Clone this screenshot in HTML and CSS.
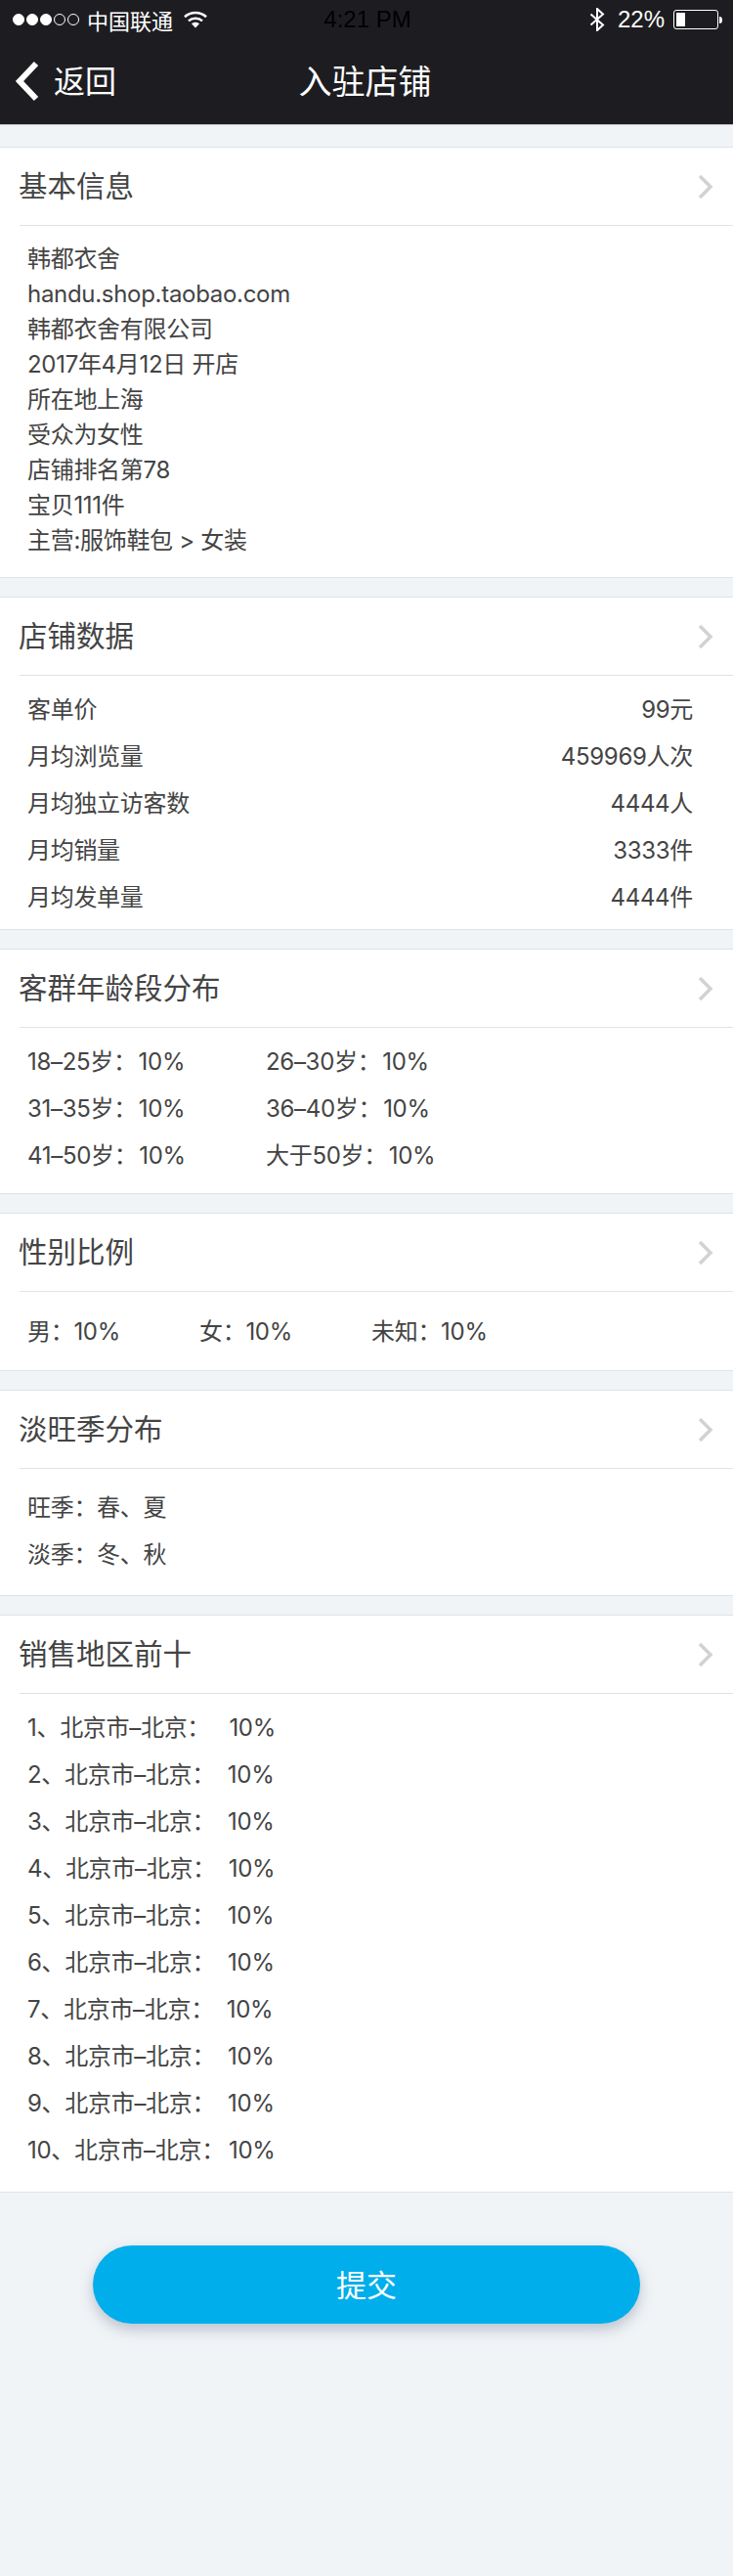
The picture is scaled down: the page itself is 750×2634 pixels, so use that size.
FILE: index.html
```html
<!DOCTYPE html>
<html lang="zh-CN">
<head>
    <meta charset="utf-8" />
    <meta name="viewport" content="width=device-width, initial-scale=1.0">
    <title>入驻店铺</title>
    <link rel="stylesheet" href="styles.css">
</head>
<body>
    <header class="topbar">
        <div class="status">
            <div class="status-left">
                <span class="signal">
                    <i class="dot on"></i><i class="dot on"></i><i class="dot on"></i><i class="dot"></i><i class="dot"></i>
                </span>
                <span class="carrier">中国联通</span>
                <svg class="wifi" width="24" height="18" viewBox="0 0 24 18">
                    <path d="M1 6.2C7 .6 17 .6 23 6.2" fill="none" stroke="#fff" stroke-width="2.6" />
                    <path d="M5 10.4C9 6.8 15 6.8 19 10.4" fill="none" stroke="#fff" stroke-width="2.6" />
                    <path d="M8 13.2C10.4 11.2 13.6 11.2 16 13.2L12 17.6Z" fill="#fff" />
                </svg>
            </div>
            <div class="time">4:21 PM</div>
            <div class="status-right">
                <svg class="bluetooth" width="16" height="24" viewBox="0 0 16 24">
                    <path d="M1.5 6.5L14 17.5L8 23V1L14 6.5L1.5 17.5" fill="none" stroke="#fff" stroke-width="2" />
                </svg>
                <span class="battery-text">22%</span>
                <span class="battery"><i class="battery-fill"></i></span>
                <i class="battery-nub"></i>
            </div>
        </div>
        <nav class="navbar">
            <a class="back">
                <svg class="back-icon" width="26" height="42" viewBox="0 0 26 42">
                    <path d="M22 3L5 21L22 39" fill="none" stroke="#fff" stroke-width="6" />
                </svg>
                <span>返回</span>
            </a>
            <h1>入驻店铺</h1>
        </nav>
    </header>

    <main>
        <section class="card">
            <div class="card-head">
                <h2>基本信息</h2>
                <svg class="arrow" width="16" height="26" viewBox="0 0 16 26"><path d="M2 2L13 13L2 24" /></svg>
            </div>
            <div class="info">
                <p>韩都衣舍</p>
                <p>handu.shop.taobao.com</p>
                <p>韩都衣舍有限公司</p>
                <p>2017年4月12日 开店</p>
                <p>所在地上海</p>
                <p>受众为女性</p>
                <p>店铺排名第78</p>
                <p>宝贝111件</p>
                <p>主营:服饰鞋包 &gt; 女装</p>
            </div>
        </section>

        <section class="card">
            <div class="card-head">
                <h2>店铺数据</h2>
                <svg class="arrow" width="16" height="26" viewBox="0 0 16 26"><path d="M2 2L13 13L2 24" /></svg>
            </div>
            <div class="rows rows-data">
                <div class="row between"><span>客单价</span><span>99元</span></div>
                <div class="row between"><span>月均浏览量</span><span>459969人次</span></div>
                <div class="row between"><span>月均独立访客数</span><span>4444人</span></div>
                <div class="row between"><span>月均销量</span><span>3333件</span></div>
                <div class="row between"><span>月均发单量</span><span>4444件</span></div>
            </div>
        </section>

        <section class="card">
            <div class="card-head">
                <h2>客群年龄段分布</h2>
                <svg class="arrow" width="16" height="26" viewBox="0 0 16 26"><path d="M2 2L13 13L2 24" /></svg>
            </div>
            <div class="rows rows-age">
                <div class="row"><span class="age">18–25岁：&#8202;10%</span><span>26–30岁：&#8202;10%</span></div>
                <div class="row"><span class="age">31–35岁：&#8202;10%</span><span>36–40岁：&#8202;10%</span></div>
                <div class="row"><span class="age">41–50岁：&#8202;10%</span><span>大于50岁：&#8202;10%</span></div>
            </div>
        </section>

        <section class="card">
            <div class="card-head">
                <h2>性别比例</h2>
                <svg class="arrow" width="16" height="26" viewBox="0 0 16 26"><path d="M2 2L13 13L2 24" /></svg>
            </div>
            <div class="rows rows-gender">
                <div class="row"><span class="gender">男：10%</span><span class="gender">女：10%</span><span>未知：10%</span></div>
            </div>
        </section>

        <section class="card">
            <div class="card-head">
                <h2>淡旺季分布</h2>
                <svg class="arrow" width="16" height="26" viewBox="0 0 16 26"><path d="M2 2L13 13L2 24" /></svg>
            </div>
            <div class="rows rows-season">
                <div class="row">旺季：春、夏</div>
                <div class="row">淡季：冬、秋</div>
            </div>
        </section>

        <section class="card">
            <div class="card-head">
                <h2>销售地区前十</h2>
                <svg class="arrow" width="16" height="26" viewBox="0 0 16 26"><path d="M2 2L13 13L2 24" /></svg>
            </div>
            <div class="rows rows-area">
                <div class="row">1、北京市–北京：&nbsp;&nbsp;&nbsp;10%</div>
                <div class="row">2、北京市–北京：&nbsp;&nbsp;10%</div>
                <div class="row">3、北京市–北京：&nbsp;&nbsp;10%</div>
                <div class="row">4、北京市–北京：&nbsp;&nbsp;10%</div>
                <div class="row">5、北京市–北京：&nbsp;&nbsp;10%</div>
                <div class="row">6、北京市–北京：&nbsp;&nbsp;10%</div>
                <div class="row">7、北京市–北京：&nbsp;&nbsp;10%</div>
                <div class="row">8、北京市–北京：&nbsp;&nbsp;10%</div>
                <div class="row">9、北京市–北京：&nbsp;&nbsp;10%</div>
                <div class="row">10、北京市–北京：&#8201;10%</div>
            </div>
        </section>

        <div class="actions">
            <button type="button" class="submit">提交</button>
        </div>
    </main>
</body>
</html>
```

FILE: styles.css
```css
* {
    box-sizing: border-box;
}
html,
body {
    margin: 0;
    padding: 0;
}
body {
    min-height: 2634px;
    background: #f0f4f7;
    color: #444;
    font-family: Inter, "Noto Sans CJK SC", sans-serif;
    font-size: 24px;
    letter-spacing: -0.3px;
}
.topbar {
    height: 128px;
    background: #1d1d21;
    border-bottom: 1px solid #c8c8c8;
    color: #fff;
    font-family: "Liberation Sans", "Noto Sans CJK SC", sans-serif;
    letter-spacing: 0;
}
.status {
    display: grid;
    grid-template-columns: 1fr auto 1fr;
    align-items: center;
    height: 40px;
    padding: 0 11px 0 13px;
}
.status-left,
.status-right {
    display: flex;
    align-items: center;
}
.status-right {
    justify-content: flex-end;
}
.signal {
    display: flex;
    gap: 2px;
}
.dot {
    width: 12px;
    height: 12px;
    border: 1px solid #fff;
    border-radius: 50%;
}
.dot.on {
    background: #fff;
}
.carrier {
    margin-left: 8px;
    font-size: 22px;
}
.wifi {
    margin-left: 11px;
}
.time {
    color: #000;
    font-size: 24px;
}
.battery-text {
    margin-left: 13px;
}
.battery {
    width: 46px;
    height: 20px;
    margin-left: 9px;
    padding: 2px;
    border: 1px solid #fff;
    border-radius: 3px;
}
.battery-fill {
    display: block;
    width: 9px;
    height: 14px;
    background: #fff;
}
.battery-nub {
    width: 3px;
    height: 7px;
    margin-left: 1px;
    background: #fff;
    border-radius: 0 3px 3px 0;
}
.navbar {
    display: flex;
    align-items: center;
    justify-content: center;
    position: relative;
    height: 87px;
    padding: 0 3px 5px 0;
}
.navbar h1 {
    margin: 0;
    font-size: 34px;
    font-weight: normal;
}
.back {
    display: flex;
    align-items: center;
    gap: 14px;
    position: absolute;
    left: 15px;
    top: 21px;
    font-size: 32px;
}
.back span {
    margin-top: 2px;
    line-height: 42px;
}
.card {
    margin-top: 19px;
    background: #fff;
    border-top: 1px solid #dfe3e8;
    border-bottom: 1px solid #dfe3e8;
}
.card:first-child {
    margin-top: 22px;
}
.card-head {
    display: flex;
    align-items: center;
    justify-content: space-between;
    height: 80px;
    margin-left: 20px;
    padding-right: 20px;
    border-bottom: 1px solid #e2e2e2;
}
.card-head h2 {
    margin: 0 0 5px -1px;
    font-size: 29.5px;
    font-weight: normal;
    letter-spacing: 0;
}
.arrow path {
    fill: none;
    stroke: #d2d2d2;
    stroke-width: 3.5;
}
.info {
    padding: 16px 28px 19px;
}
.info p {
    margin: 0;
    line-height: 36px;
}
.rows {
    padding: 11px 41px 8px 28px;
}
.row {
    display: flex;
    line-height: 48px;
}
.between {
    justify-content: space-between;
}
.age {
    width: 244px;
}
.gender {
    width: 176px;
}
.rows-age {
    padding-bottom: 14px;
}
.rows-gender {
    padding-top: 17px;
    padding-bottom: 15px;
}
.rows-season {
    padding-top: 16px;
    padding-bottom: 17px;
}
.rows-area {
    padding-top: 11px;
    padding-bottom: 18px;
}
.actions {
    display: flex;
    justify-content: center;
    padding-top: 54px;
}
.submit {
    width: 560px;
    height: 80px;
    padding: 0 0 3px;
    border: none;
    border-radius: 40px;
    background: #00aeeb;
    color: #fff;
    font-family: inherit;
    font-size: 31px;
    box-shadow: 0 6px 14px rgba(90, 100, 130, 0.35);
}
```
